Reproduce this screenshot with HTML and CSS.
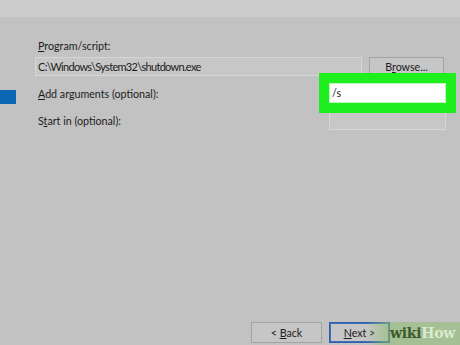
FILE: index.html
```html
<!DOCTYPE html>
<html>
<head>
<meta charset="utf-8">
<link rel="stylesheet" href="styles.css">
</head>
<body>
<div class="page">
  <div class="topband"></div>
  <div class="main">
    <div class="sidebar"><div class="marker"></div></div>
    <div class="form">
      <div class="label first"><u>P</u>rogram/script:</div>
      <div class="row r1">
        <div class="field wide path">C:\Windows\System32\shutdown.exe</div>
        <div class="btn browse">B<u>r</u>owse...</div>
      </div>
      <div class="row r2">
        <div class="label"><u>A</u>dd arguments (optional):</div>
        <div class="field short hl">/s</div>
      </div>
      <div class="row r3">
        <div class="label">S<u>t</u>art in (optional):</div>
        <div class="field short dim"></div>
      </div>
    </div>
  </div>
  <div class="footer">
    <div class="btn back">&lt; <u>B</u>ack</div>
    <div class="btn next"><u>N</u>ext &gt;</div>
    <div class="wm"><span class="wk">wiki</span><span class="hw">How</span></div>
  </div>
</div>
</body>
</html>
```
FILE: styles.css
```css
html, body { margin: 0; padding: 0; }
body {
  background: #c2c2c2;
  font-family: Lato, "Noto Sans", sans-serif;
  font-size: 10.7px;
  color: #1c1c1c;
}
.page {
  width: 460px;
  height: 345px;
  display: flex;
  flex-direction: column;
  position: relative;
  overflow: hidden;
}
.topband { height: 17px; background: #cdcdcd; }
.main { display: flex; padding-top: 21px; }
.sidebar { width: 16px; }
.marker { width: 16px; height: 14px; background: #0b66b4; margin-top: 52px; }
.form { width: 411px; margin-left: 19px; display: flex; flex-direction: column; }
.label { line-height: 15px; padding-left: 3px; white-space: nowrap; }
.label.first { margin-bottom: 4px; }
.row { display: flex; align-items: center; justify-content: space-between; }
.r2 { margin-top: 7px; }
.r3 { margin-top: 7px; }
.field {
  box-sizing: border-box;
  background: #c7c7c7;
  border: 1px solid #d6d6d6;
  height: 19px;
  line-height: 17px;
  padding-left: 2px;
  white-space: nowrap;
}
.path { font-size: 11px; letter-spacing: -0.7px; }
.field.wide { width: 327px; }
.field.short { width: 117px; height: 20px; line-height: 18px; }
.field.hl {
  background: #ffffff;
  border-color: #bff5bf;
  position: relative;
  z-index: 1;
  box-shadow: 0 0 0 10px #1fef1f;
}
.btn {
  box-sizing: border-box;
  background: #c6c6c6;
  border: 1px solid #a3a3a3;
  height: 19px;
  line-height: 17px;
  text-align: center;
  white-space: nowrap;
}
.browse { width: 75px; margin-right: 2px; }
.footer {
  margin-top: auto;
  display: flex;
  gap: 7px;
  padding-left: 251px;
  padding-bottom: 2px;
  position: relative;
}
.back { width: 71px; height: 21px; line-height: 19px; }
.next { width: 61px; height: 21px; line-height: 19px; border: 1px solid #2f5fa8; box-shadow: inset 0 0 0 1px #3d6db8; }
.wm {
  position: absolute;
  right: 0;
  bottom: 0;
  width: 95px;
  height: 23px;
  background: linear-gradient(to right, rgba(140, 190, 110, 0) 0, rgba(140, 190, 110, 0.55) 22px);
  font-family: "DejaVu Serif", "Liberation Serif", serif;
  font-weight: bold;
  font-size: 14px;
  line-height: 23px;
  text-align: right;
  padding-right: 5px;
  box-sizing: border-box;
  letter-spacing: -0.3px;
}
.wk { color: #3d5a2c; }
.hw { color: #dbe9cf; }
```
